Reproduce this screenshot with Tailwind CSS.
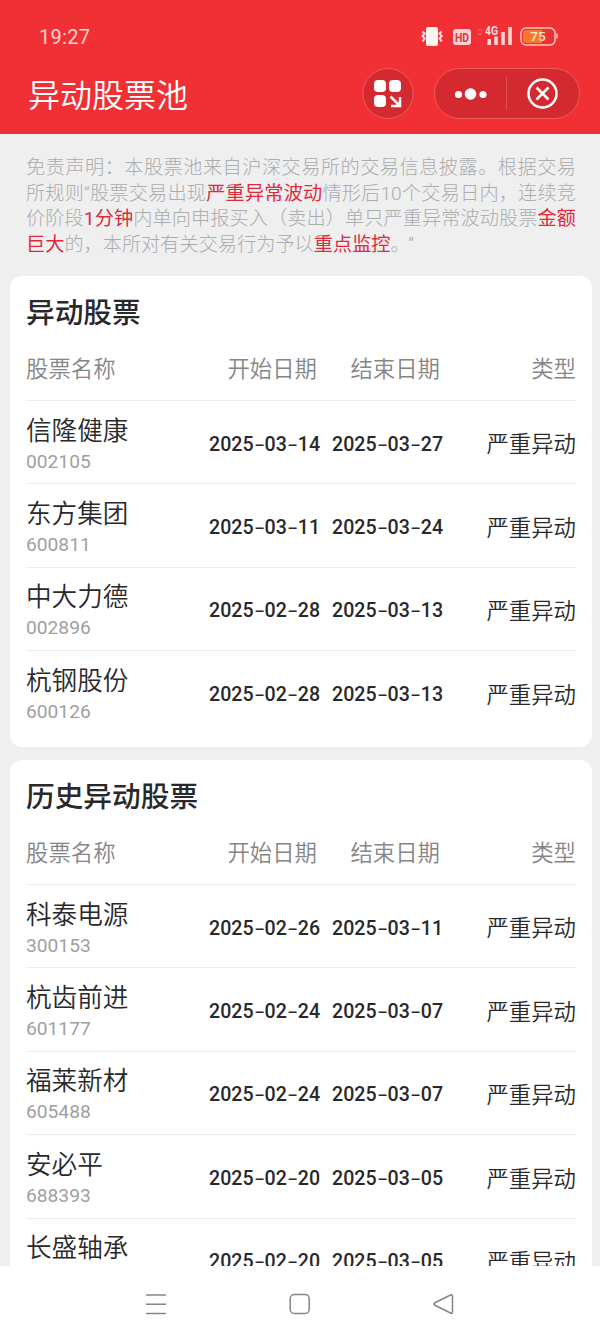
<!DOCTYPE html>
<html lang="zh-CN">
<head>
<meta charset="utf-8">
<title>异动股票池</title>
<script src="https://cdn.jsdelivr.net/npm/@tailwindcss/browser@4"></script>
</head>
<body class="flex h-[1341px] w-[600px] flex-col overflow-hidden bg-[#efeff0] font-['Roboto','Noto_Sans_CJK_SC',sans-serif] text-[#29292b]">
<header class="flex h-[134px] shrink-0 flex-col bg-[#f03035] text-white">
  <div class="flex h-[68px] items-center justify-between pt-[5px] pr-[42px] pl-[39px]">
    <span class="text-[20px] tracking-[0.3px] text-[#ffd3cf]">19:27</span>
    <svg class="h-[45px] w-[148px]" viewBox="0 0 148 45" fill="none">
      <rect x="16" y="13" width="12" height="19" rx="2" fill="#fff5ef"/>
      <path d="M12.500 17.500l2.200 2-2.200 2.500 2.200 2.500-2.200 3M31.500 17.500l-2 2 2.200 2.500-2.200 2.500 2.200 3" stroke="#ffe2dc" stroke-width="2"/>
      <rect x="43" y="15" width="18" height="16" rx="3" fill="#ffd0d0"/>
      <text x="52" y="27.500" text-anchor="middle" font-size="12.500" font-weight="700" fill="#d63a40" textLength="14" lengthAdjust="spacingAndGlyphs">HD</text>
      <path d="M68 17l2-2 2 2M68 19l2 2 2-2" stroke="#f8605f" stroke-width="1.200"/>
      <path d="M79.200 25v6M86 22.500v8.500M93 18v13M100 13v18" stroke="#ffd5d2" stroke-width="3.600"/>
      <text x="75" y="21" font-size="12" font-weight="700" fill="#ffd9d6" stroke="#f03035" stroke-width="1.500" paint-order="stroke" textLength="13" lengthAdjust="spacingAndGlyphs">4G</text>
      <rect x="111" y="14" width="34" height="17" rx="5" stroke="#ffc9b8" stroke-width="1.500"/>
      <path d="M116 16h16v13h-16a3 3 0 0 1-3-3v-7a3 3 0 0 1 3-3z" fill="#f47a2a"/>
      <path d="M147 19.500v5" stroke="#ffc9b8" stroke-width="1.500"/>
      <text x="128" y="27.300" text-anchor="middle" font-size="13.500" font-weight="500" fill="#ffe6c4">75</text>
    </svg>
  </div>
  <div class="flex h-[52px] items-center pr-5 pl-7">
    <h1 class="flex-1 pt-1 text-[32px] leading-[52px] font-[350]">异动股票池</h1>
    <svg class="mr-5 h-[52px] w-[52px]" viewBox="0 0 52 52" fill="none">
      <circle cx="26" cy="25.500" r="25" fill="#d42a2f" stroke="#f0585b"/>
      <g fill="#fff"><rect x="12" y="12" width="12" height="12" rx="4"/><rect x="27" y="12" width="12" height="12" rx="4"/><rect x="12" y="27" width="12" height="12" rx="4"/></g>
      <path d="M28.500 28.500l9 9M38 29v9h-9" stroke="#fff" stroke-width="2.500"/>
    </svg>
    <svg class="h-[52px] w-[146px]" viewBox="0 0 146 52" fill="none">
      <rect x=".5" y=".5" width="145" height="50" rx="25" fill="#d42a2f" stroke="#f0585b"/>
      <g fill="#fff"><circle cx="24.500" cy="26.500" r="3.600"/><circle cx="36.500" cy="26" r="5.800"/><circle cx="49" cy="26.500" r="3.600"/></g>
      <path d="M72.500 9v33" stroke="#e04f52"/>
      <circle cx="108.500" cy="25.500" r="14" stroke="#fff" stroke-width="2.500"/>
      <path d="M102.500 19.500l12 12M114.500 19.500l-12 12" stroke="#fff" stroke-width="2.500"/>
    </svg>
  </div>
</header>

<main class="flex min-h-0 flex-1 flex-col overflow-hidden pr-2 pl-[10px]">
  <div class="mt-[21px] mb-[18px] h-[103px] shrink-0 px-4 text-[19.200px] leading-[25.700px] font-light whitespace-nowrap text-[#acacad]">
    <p class="[text-align-last:justify]">免责声明：本股票池来自沪深交易所的交易信息披露。根据交易</p>
    <p class="[text-align-last:justify]">所规则“股票交易出现<span class="font-normal text-[#df2a3c]">严重异常波动</span>情形后10个交易日内，连续竞</p>
    <p class="[text-align-last:justify]">价阶段<span class="font-normal text-[#df2a3c]">1分钟</span>内单向申报买入（卖出）单只严重异常波动股票<span class="font-normal text-[#df2a3c]">金额</span></p>
    <p><span class="font-normal text-[#df2a3c]">巨大</span>的，本所对有关交易行为予以<span class="font-normal text-[#df2a3c]">重点监控</span>。<span class="ml-2">”</span></p>
  </div>
  <section class="mb-[13px] h-[471px] shrink-0 rounded-xl bg-white px-4 pt-4">
    <h2 class="h-[40px] pt-px text-[28.700px] leading-[40px] font-medium">异动股票</h2>
    <div class="grid h-[68px] grid-cols-[1fr_123px_123px_136px] items-center pt-[7px] text-right text-[22.400px] font-[350] text-[#858586]">
      <span class="text-left">股票名称</span><span>开始日期</span><span>结束日期</span><span>类型</span>
    </div>
    <div id="current"></div>
  </section>
  <section class="h-[600px] shrink-0 rounded-t-xl bg-white px-4 pt-4">
    <h2 class="h-[40px] pt-px text-[28.700px] leading-[40px] font-medium">历史异动股票</h2>
    <div class="grid h-[68px] grid-cols-[1fr_123px_123px_136px] items-center pt-[7px] text-right text-[22.400px] font-[350] text-[#858586]">
      <span class="text-left">股票名称</span><span>开始日期</span><span>结束日期</span><span>类型</span>
    </div>
    <div id="history"></div>
  </section>
</main>

<nav class="flex h-[75px] shrink-0 items-center justify-between bg-white px-[145px]">
  <svg class="h-6 w-[22px]" viewBox="0 0 22 24" fill="none" stroke="#858585" stroke-width="1.500"><path d="M1 3h20M1 12.200h20M1 21.500h20"/></svg>
  <svg class="h-6 w-[22px]" viewBox="0 0 22 24" fill="none" stroke="#858585" stroke-width="1.500"><rect x="1.200" y="2.500" width="19" height="19" rx="4"/></svg>
  <svg class="h-6 w-[22px]" viewBox="0 0 22 24" fill="none" stroke="#858585" stroke-width="1.500" stroke-linejoin="round"><path d="M1.500 11L17.500 3q2-.8 2 1v16q0 2-2 1L1.500 13q-1.500-1 0-2z"/></svg>
</nav>

<script>
const date = d => d.split('-').join('<span class="inline-block w-[11px] scale-x-[1.7] text-center font-normal">-</span>');
const row = ([name, code, start, end]) => `
  <div class="grid h-[83.400px] grid-cols-[183px_123px_1fr_auto] items-center border-t border-[#ececec]">
    <div class="pt-[3px]"><div class="h-[36px] text-[25.600px] leading-[36px] font-[350]">${name}</div><div class="h-[26px] text-[19.200px] leading-[26px] text-[#a0a0a1]">${code}</div></div>
    <div class="pt-[4px] text-[19.600px] font-medium whitespace-nowrap">${date(start)}</div>
    <div class="pt-[4px] text-[19.600px] font-medium whitespace-nowrap">${date(end)}</div>
    <div class="pt-[6px] text-[22.400px] font-[350]">严重异动</div>
  </div>`;
document.getElementById('current').innerHTML = [
  ['信隆健康','002105','2025-03-14','2025-03-27'],
  ['东方集团','600811','2025-03-11','2025-03-24'],
  ['中大力德','002896','2025-02-28','2025-03-13'],
  ['杭钢股份','600126','2025-02-28','2025-03-13']
].map(row).join('');
document.getElementById('history').innerHTML = [
  ['科泰电源','300153','2025-02-26','2025-03-11'],
  ['杭齿前进','601177','2025-02-24','2025-03-07'],
  ['福莱新材','605488','2025-02-24','2025-03-07'],
  ['安必平','688393','2025-02-20','2025-03-05'],
  ['长盛轴承','','2025-02-20','2025-03-05']
].map(row).join('');
</script>
</body>
</html>
